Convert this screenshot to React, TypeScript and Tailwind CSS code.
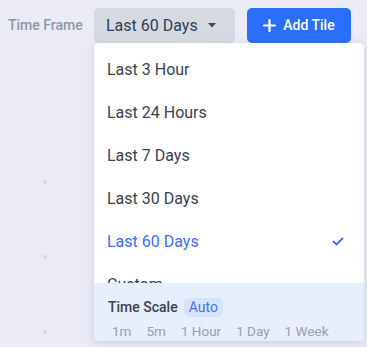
const OPTIONS = ["Last 3 Hour", "Last 24 Hours", "Last 7 Days", "Last 30 Days", "Last 60 Days", "Custom"];
const SCALES = ["1m", "5m", "1 Hour", "1 Day", "1 Week"];
const SELECTED = "Last 60 Days";

export default function App() {
  return (
    <div className="relative h-[347px] w-[367px] overflow-hidden bg-[#ebebf7] font-['Roboto',sans-serif]">
      {/* toolbar */}
      <div className="flex items-center pl-2 pt-2">
        <span className="w-[86px] text-[14px] font-medium text-[#8a97a7]">Time Frame</span>
        <button className="flex h-[35px] w-[141px] items-center rounded-[5px] bg-[#d5d9e0] pl-3 text-[16px] text-[#2e3d5a]">
          Last 60 Days
          <svg width="8" height="5" viewBox="0 0 8 5" className="ml-[10px]">
            <path d="M0 0 L8 0 L4 4.5 Z" fill="#3c4658" />
          </svg>
        </button>
        <button className="ml-3 flex h-[35px] w-[104px] items-center justify-center gap-[7px] rounded-[5px] bg-[#2a6efc] text-[14px] font-medium text-white">
          <svg width="13" height="13" viewBox="0 0 13 13">
            <path d="M6.5 1 V12 M1 6.5 H12" stroke="white" strokeWidth="2.2" strokeLinecap="round" />
          </svg>
          Add Tile
        </button>
      </div>

      {/* background dots */}
      <div className="ml-[43px] mt-[137px] flex flex-col gap-[71px]">
        <div className="h-1 w-1 rounded-full bg-[#d3d7df]" />
        <div className="h-1 w-1 rounded-full bg-[#d3d7df]" />
        <div className="h-1 w-1 rounded-full bg-[#d3d7df]" />
      </div>

      {/* dropdown menu */}
      <div className="absolute left-[94px] top-[43px] flex h-[298px] w-[270px] flex-col overflow-hidden rounded-[5px] bg-white shadow-[0_2px_8px_rgba(60,60,110,0.18)]">
        <div className="h-[240px] overflow-hidden pt-[5px]">
          {OPTIONS.map((o) => (
            <div
              key={o}
              className={
                "flex h-[43px] items-center justify-between pl-[13px] pr-[20px] text-[16px] " +
                (o === SELECTED ? "text-[#3d6bfb]" : "text-[#3a4150]")
              }
            >
              {o}
              {o === SELECTED && (
                <svg width="12" height="9" viewBox="0 0 12 9">
                  <path d="M1 4.2 L4.5 7.5 L11 1" fill="none" stroke="#3d63f5" strokeWidth="1.8" />
                </svg>
              )}
            </div>
          ))}
        </div>
        <div className="flex-1 bg-[#e7eefc] pl-[14px] pt-[14px]">
          <div className="flex items-center gap-[6px]">
            <span className="text-[14px] font-medium text-[#3a4150]">Time Scale</span>
            <span className="flex h-[19px] items-center rounded-[5px] bg-[#d6e3fc] px-[5px] text-[14px] text-[#4a72fb]">
              Auto
            </span>
          </div>
          <div className="mt-[3px] flex gap-[15px] pl-[4px] text-[13.5px] text-[#9aa0a8]">
            {SCALES.map((s) => (
              <span key={s}>{s}</span>
            ))}
          </div>
        </div>
      </div>
    </div>
  );
}
